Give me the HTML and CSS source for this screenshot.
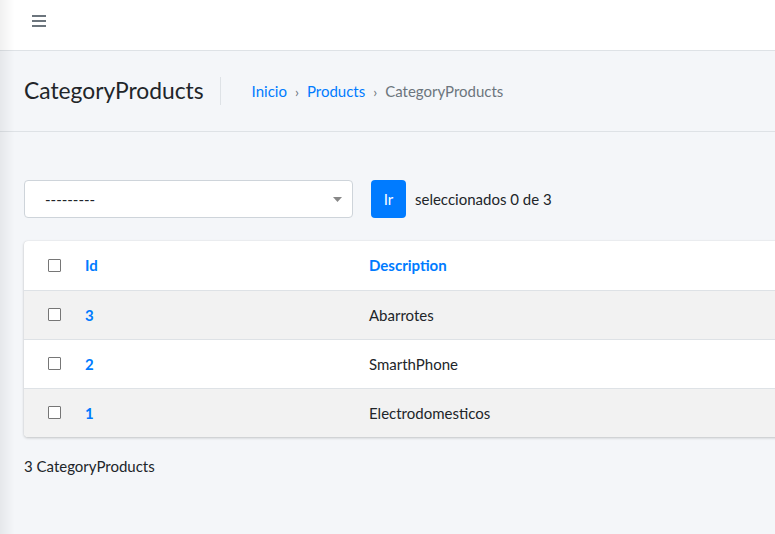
FILE: index.html
```html
<!DOCTYPE html>
<html lang="es">
<head>
<meta charset="utf-8">
<title>CategoryProducts</title>
<link rel="stylesheet" href="styles.css">
</head>
<body>
<div class="wrapper">
  <nav class="topbar">
    <a class="menu-btn" href="#" aria-label="menu">
      <svg width="14" height="12" viewBox="0 0 14 12"><rect x="0" y="0" width="14" height="2" fill="#6c757d"/><rect x="0" y="5" width="14" height="2" fill="#6c757d"/><rect x="0" y="10" width="14" height="2" fill="#6c757d"/></svg>
    </a>
  </nav>
  <header class="content-header">
    <h1 class="title">CategoryProducts</h1>
    <ol class="breadcrumb">
      <li><a href="#">Inicio</a></li>
      <li class="sep">›</li>
      <li><a href="#">Products</a></li>
      <li class="sep">›</li>
      <li class="active">CategoryProducts</li>
    </ol>
  </header>
  <main class="content">
    <div class="actions">
      <div class="select">
        <span>---------</span>
        <svg class="caret" width="9" height="5" viewBox="0 0 9 5"><path d="M0 0 L9 0 L4.5 5 Z" fill="#888"/></svg>
      </div>
      <button class="btn">Ir</button>
      <span class="counter">seleccionados 0 de 3</span>
    </div>
    <div class="card">
      <table class="table">
        <colgroup><col class="w-check"><col class="w-id"><col></colgroup>
        <thead>
          <tr><th class="c-check"><span class="cb"></span></th><th class="c-id"><a href="#">Id</a></th><th><a href="#">Description</a></th></tr>
        </thead>
        <tbody>
          <tr class="odd"><td class="c-check"><span class="cb"></span></td><td class="c-id"><a href="#">3</a></td><td>Abarrotes</td></tr>
          <tr><td class="c-check"><span class="cb"></span></td><td class="c-id"><a href="#">2</a></td><td>SmarthPhone</td></tr>
          <tr class="odd"><td class="c-check"><span class="cb"></span></td><td class="c-id"><a href="#">1</a></td><td>Electrodomesticos</td></tr>
        </tbody>
      </table>
    </div>
    <p class="total">3 CategoryProducts</p>
  </main>
</div>
</body>
</html>
```
FILE: styles.css
```css
* { box-sizing: border-box; }
html, body { margin: 0; padding: 0; }
body {
  font-family: "Lato", "Noto Sans", sans-serif;
  font-size: 15px;
  color: #212529;
  background: #f4f6f9;
  overflow: hidden;
  height: 534px;
}
body::before {
  content: "";
  position: fixed;
  left: 0; top: 0; bottom: 0;
  width: 14px;
  background: linear-gradient(to right, rgba(0,0,0,0.06), rgba(0,0,0,0));
  pointer-events: none;
  z-index: 5;
}
a { color: #007bff; text-decoration: none; }
.topbar {
  height: 51px;
  background: #fff;
  border-bottom: 1px solid #dee2e6;
  display: flex;
  align-items: center;
  padding-left: 32px;
}
.menu-btn { display: flex; margin-top: -8px; }
.content-header {
  height: 81px;
  display: flex;
  align-items: center;
  padding-left: 24px;
  border-bottom: 1px solid #dee2e6;
}
.title {
  margin: 0;
  font-size: 22.8px;
  font-weight: 400;
  line-height: 1.2;
  padding-right: 16px;
  border-right: 1px solid #dee2e6;
  height: 28px;
  display: flex;
  align-items: center;
}
.breadcrumb {
  list-style: none;
  margin: 0 0 0 31px;
  padding: 0;
  display: flex;
  align-items: center;
  font-size: 15px;
}
.breadcrumb .sep { color: #6c757d; padding: 0 8px; font-size: 14px; }
.breadcrumb .active { color: #6c757d; }
.content { padding: 48px 0 0 24px; }
.actions { display: flex; align-items: center; height: 38px; }
.select {
  width: 329px;
  height: 38px;
  background: #fff;
  border: 1px solid #ced4da;
  border-radius: 4px;
  display: flex;
  align-items: center;
  justify-content: space-between;
  padding: 0 10px 0 20px;
  font-size: 15px;
  color: #212529;
}
.btn {
  margin-left: 18px;
  width: 35px;
  height: 38px;
  background: #007bff;
  color: #fff;
  border: none;
  border-radius: 4px;
  font: inherit;
  font-size: 15px;
  padding: 0;
}
.counter { margin-left: 9px; font-size: 15px; }
.card {
  margin-top: 23px;
  margin-right: -20px;
  background: #fff;
  border-radius: 4px;
  box-shadow: 0 0 1px rgba(0,0,0,.125), 0 1px 3px rgba(0,0,0,.2);
  overflow: hidden;
}
.table { width: 100%; border-collapse: collapse; table-layout: fixed; }
.w-check { width: 49px; }
.w-id { width: 284px; }
.table th, .table td {
  text-align: left;
  padding: 12px;
  line-height: 24px;
  height: 49px;
  vertical-align: middle;
}
.table th { font-weight: 700; border-bottom: 0; }
.table tbody td { border-top: 1px solid #dee2e6; }
.table tr.odd td { background: #f2f2f2; }
.c-check { padding-left: 24px !important; padding-right: 0 !important; }
.c-id a { font-weight: 700; }
.cb {
  display: block;
  width: 13px;
  height: 13px;
  border: 1px solid #767676;
  border-radius: 1px;
  background: #fff;
}
.total { margin: 20px 0 0; font-size: 15px; }
```
